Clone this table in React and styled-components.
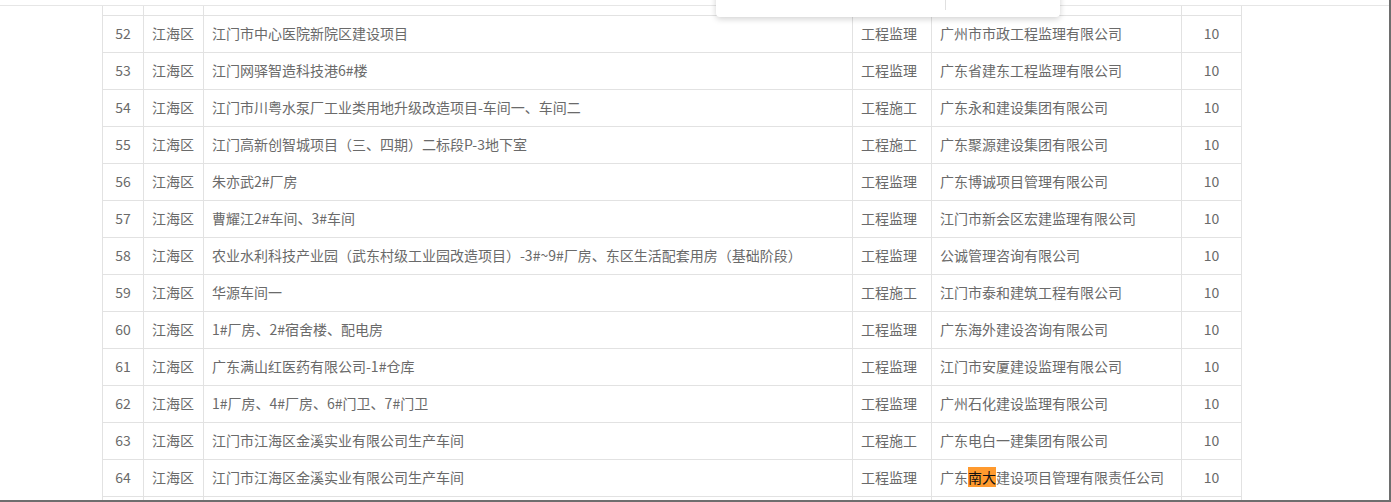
import React from "react";
import styled, { createGlobalStyle } from "styled-components";

const Global = createGlobalStyle`
  html, body { margin: 0; padding: 0; background: #fff; }
  body { font-family: "Noto Sans CJK SC", "Microsoft YaHei", sans-serif; }
`;

const Frame = styled.div`
  position: relative;
  box-sizing: border-box;
  width: 1391px;
  height: 502px;
  overflow: hidden;
  background: #fff;
  border-right: 2px solid #6e6e6e;
  border-bottom: 2px solid #6e6e6e;
`;

const TopRule = styled.div`
  height: 5px;
  border-bottom: 1px solid #e6e6e6;
`;

const Table = styled.table`
  margin-left: 102px;
  border-collapse: collapse;
  table-layout: fixed;
  width: 1140px;
  font-size: 14px;
  color: #6a6a6a;
`;

const Td = styled.td`
  height: ${(p) => (p.$short ? "9px" : "34px")};
  padding: ${(p) => (p.$short ? "0 8px" : "0 8px 2px")};
  border: 1px solid #e2e2e2;
  border-top: ${(p) => (p.$short ? "none" : "1px solid #e2e2e2")};
  text-align: ${(p) => (p.$center ? "center" : "left")};
  white-space: nowrap;
  overflow: hidden;
  line-height: 20px;
  vertical-align: middle;
`;

const Mark = styled.span`
  background: #ff9a2e;
  color: #111;
`;

const Popup = styled.div`
  position: absolute;
  left: 716px;
  top: -20px;
  width: 344px;
  height: 37px;
  background: #fff;
  border-radius: 4px;
  box-shadow: 0 2px 6px rgba(0, 0, 0, 0.18);
  display: flex;
  justify-content: flex-end;
  align-items: flex-start;
  padding-right: 114px;
  box-sizing: border-box;
`;

const PopDivider = styled.div`
  width: 1px;
  height: 30px;
  background: #e0e0e0;
`;

const rows = [
  ["52", "江门市中心医院新院区建设项目", "工程监理", "广州市市政工程监理有限公司"],
  ["53", "江门网驿智造科技港6#楼", "工程监理", "广东省建东工程监理有限公司"],
  ["54", "江门市川粤水泵厂工业类用地升级改造项目-车间一、车间二", "工程施工", "广东永和建设集团有限公司"],
  ["55", "江门高新创智城项目（三、四期）二标段P-3地下室", "工程施工", "广东聚源建设集团有限公司"],
  ["56", "朱亦武2#厂房", "工程监理", "广东博诚项目管理有限公司"],
  ["57", "曹耀江2#车间、3#车间", "工程监理", "江门市新会区宏建监理有限公司"],
  ["58", "农业水利科技产业园（武东村级工业园改造项目）-3#~9#厂房、东区生活配套用房（基础阶段）", "工程监理", "公诚管理咨询有限公司"],
  ["59", "华源车间一", "工程施工", "江门市泰和建筑工程有限公司"],
  ["60", "1#厂房、2#宿舍楼、配电房", "工程监理", "广东海外建设咨询有限公司"],
  ["61", "广东满山红医药有限公司-1#仓库", "工程监理", "江门市安厦建设监理有限公司"],
  ["62", "1#厂房、4#厂房、6#门卫、7#门卫", "工程监理", "广州石化建设监理有限公司"],
  ["63", "江门市江海区金溪实业有限公司生产车间", "工程施工", "广东电白一建集团有限公司"],
  ["64", "江门市江海区金溪实业有限公司生产车间", "工程监理", null],
];

function EmptyRow({ short }) {
  return (
    <tr>
      {[0, 1, 2, 3, 4, 5].map((i) => (
        <Td key={i} $short={short} />
      ))}
    </tr>
  );
}

export default function App() {
  return (
    <Frame>
      <Global />
      <TopRule />
      <Table>
        <colgroup>
          <col style={{ width: 41 }} />
          <col style={{ width: 60 }} />
          <col style={{ width: 649 }} />
          <col style={{ width: 79 }} />
          <col style={{ width: 250 }} />
          <col style={{ width: 60 }} />
        </colgroup>
        <tbody>
          <EmptyRow short />
          {rows.map((r) => (
            <tr key={r[0]}>
              <Td $center>{r[0]}</Td>
              <Td>江海区</Td>
              <Td>{r[1]}</Td>
              <Td>{r[2]}</Td>
              <Td>
                {r[3] || (
                  <>
                    广东<Mark>南大</Mark>建设项目管理有限责任公司
                  </>
                )}
              </Td>
              <Td $center>10</Td>
            </tr>
          ))}
          <EmptyRow />
        </tbody>
      </Table>
      <Popup>
        <PopDivider />
      </Popup>
    </Frame>
  );
}
